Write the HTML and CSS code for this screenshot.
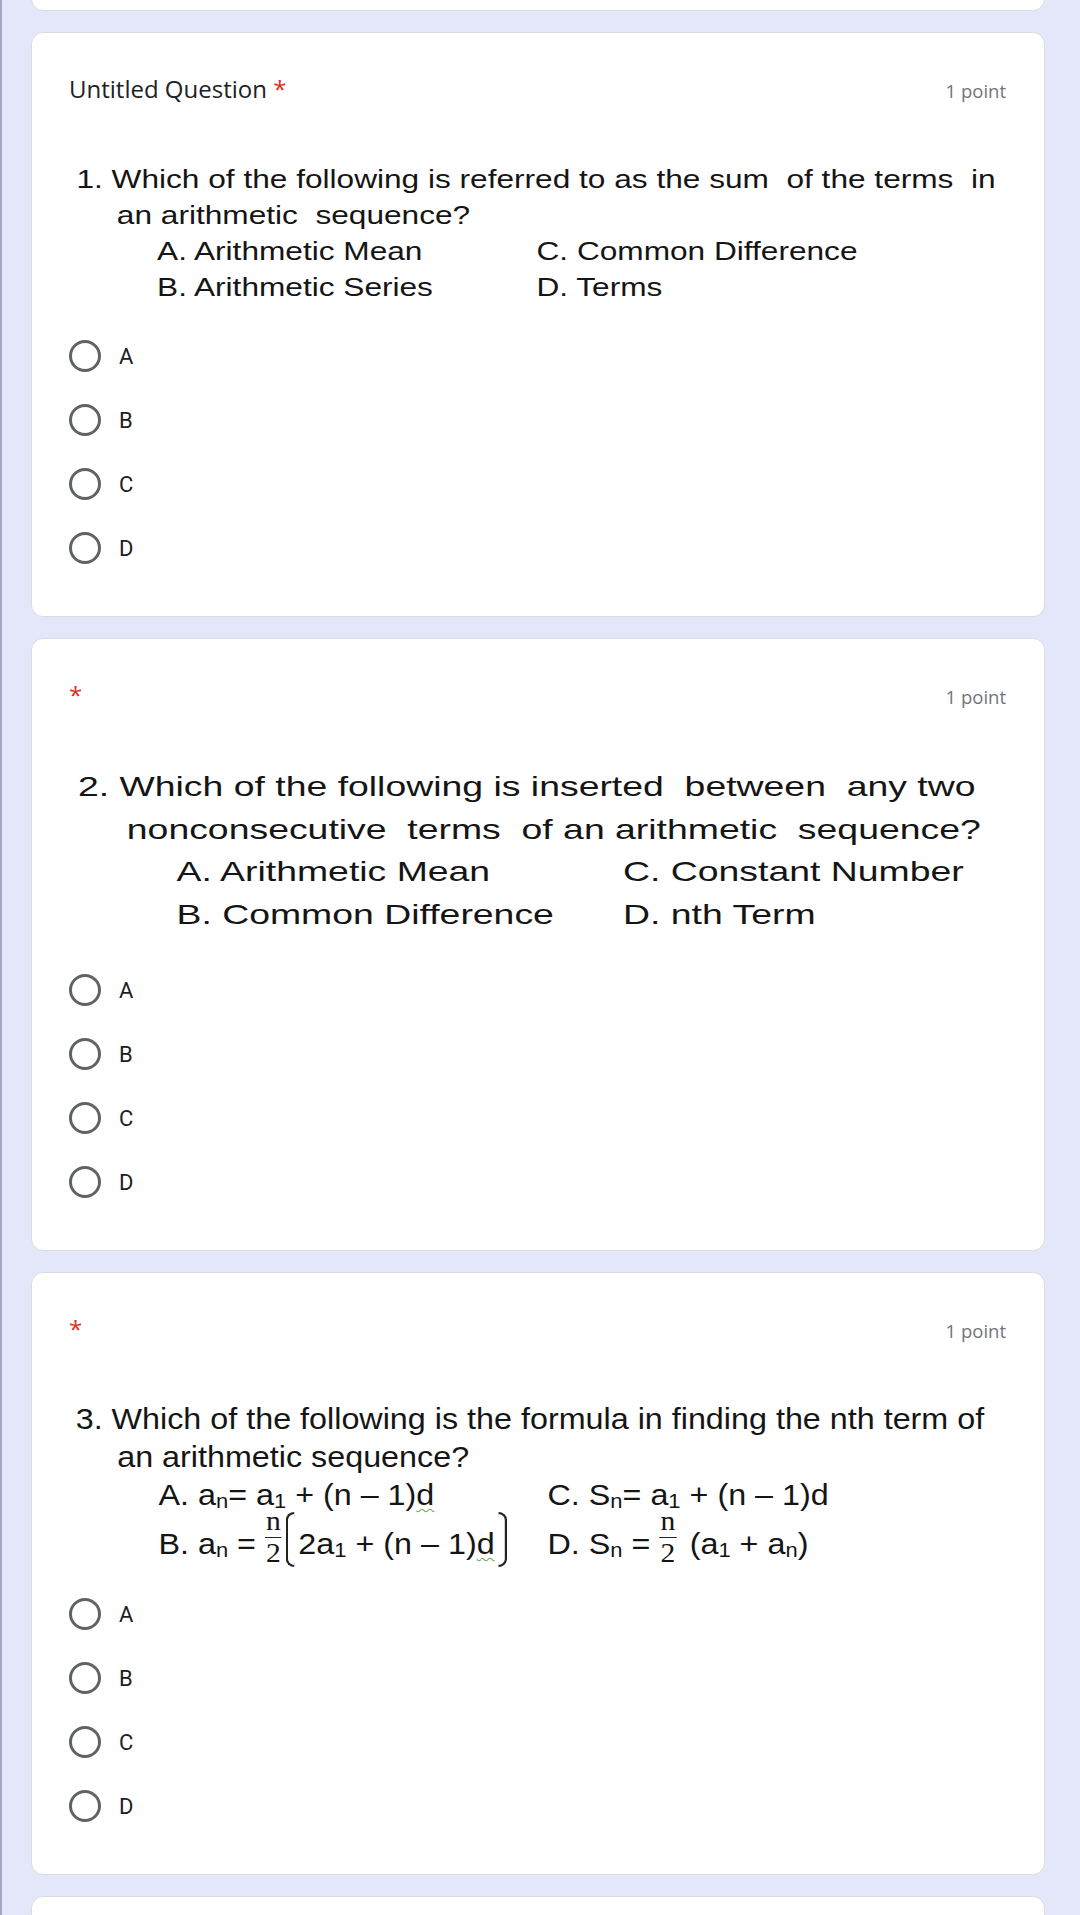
FILE: index.html
```html
<!DOCTYPE html>
<html lang="en">
<head>
    <meta charset="UTF-8">
    <meta name="viewport" content="width=device-width, initial-scale=1.0">
    <title>Quiz</title>
    <link rel="stylesheet" href="styles.css">
</head>
<body>
    <div class="page">
        <div class="card card-tail"></div>

        <div class="card">
            <div class="card-head">
                <div class="title">Untitled Question <span class="req">*</span></div>
                <div class="pts">1 point</div>
            </div>
            <div class="qimg q1">
                <div class="ln first">1. Which of the following is referred to as the sum  of the terms  in</div>
                <div class="ln ind">an arithmetic  sequence?</div>
                <div class="ln opts"><span>A. Arithmetic Mean</span><span>C. Common Difference</span></div>
                <div class="ln opts"><span>B. Arithmetic Series</span><span>D. Terms</span></div>
            </div>
            <div class="choices c1">
                <label class="radio"><span class="circle"></span><span class="lbl">A</span></label>
                <label class="radio"><span class="circle"></span><span class="lbl">B</span></label>
                <label class="radio"><span class="circle"></span><span class="lbl">C</span></label>
                <label class="radio"><span class="circle"></span><span class="lbl">D</span></label>
            </div>
        </div>

        <div class="card">
            <div class="card-head">
                <div class="title"><span class="req">*</span></div>
                <div class="pts">1 point</div>
            </div>
            <div class="qimg q2">
                <div class="ln first">2. Which of the following is inserted  between  any two</div>
                <div class="ln ind">nonconsecutive  terms  of an arithmetic  sequence?</div>
                <div class="ln opts"><span>A. Arithmetic Mean</span><span>C. Constant Number</span></div>
                <div class="ln opts"><span>B. Common Difference</span><span>D. nth Term</span></div>
            </div>
            <div class="choices c2">
                <label class="radio"><span class="circle"></span><span class="lbl">A</span></label>
                <label class="radio"><span class="circle"></span><span class="lbl">B</span></label>
                <label class="radio"><span class="circle"></span><span class="lbl">C</span></label>
                <label class="radio"><span class="circle"></span><span class="lbl">D</span></label>
            </div>
        </div>

        <div class="card">
            <div class="card-head">
                <div class="title"><span class="req">*</span></div>
                <div class="pts">1 point</div>
            </div>
            <div class="qimg q3">
                <div class="ln first">3. Which of the following is the formula in finding the nth term of</div>
                <div class="ln ind">an arithmetic sequence?</div>
                <div class="ln opts"><span>A. a<sub>n</sub>= a<sub>1</sub> + (n – 1)<span class="sq">d</span></span><span>C. S<sub>n</sub>= a<sub>1</sub> + (n – 1)d</span></div>
                <div class="ln opts tall"><span>B. a<sub>n</sub> = <span class="frac"><span class="num">n</span><span class="den">2</span></span><span class="brk"></span>2a<sub>1</sub> + (n – 1)<span class="sq">d</span><span class="brk r"></span></span><span>D. S<sub>n</sub> = <span class="frac"><span class="num">n</span><span class="den">2</span></span> (a<sub>1</sub> + a<sub>n</sub>)</span></div>
            </div>
            <div class="choices c3">
                <label class="radio"><span class="circle"></span><span class="lbl">A</span></label>
                <label class="radio"><span class="circle"></span><span class="lbl">B</span></label>
                <label class="radio"><span class="circle"></span><span class="lbl">C</span></label>
                <label class="radio"><span class="circle"></span><span class="lbl">D</span></label>
            </div>
        </div>

        <div class="card card-next"></div>
    </div>
</body>
</html>
```

FILE: styles.css
```css
html {
    overflow: hidden;
}
body {
    margin: 0;
    border-left: 2px solid #a4a7c2;
    background-color: #e4e7f9;
    font-family: "Open Sans", Roboto, sans-serif;
    color: #202124;
}
.page {
    display: flex;
    flex-direction: column;
    gap: 21px;
    padding: 0 35px 0 29px;
}
.card {
    background-color: #fff;
    border: 1px solid #dadce0;
    border-radius: 12px;
    padding: 40px 38px 36px 37px;
}
.card-tail {
    height: 41px;
    margin-top: -30px;
    padding: 0;
    box-sizing: border-box;
}
.card-next {
    height: 80px;
    padding: 0;
}
.card-head {
    display: flex;
    justify-content: space-between;
    align-items: baseline;
    height: 32px;
    line-height: 32px;
}
.title {
    font-size: 24px;
    color: #202124;
}
.req {
    color: #d93025;
}
.pts {
    font-size: 18.5px;
    color: #70757a;
}

/* question pictures */
.qimg {
    width: 700px;
    font-family: "Liberation Sans", Arial, sans-serif;
    color: #151515;
    transform-origin: left top;
}
.qimg .ln {
    white-space: pre;
}
.qimg .opts {
    display: grid;
}
.q1 {
    margin-top: 56px;
    font-size: 25.5px;
    line-height: 36px;
    transform: scaleX(1.24);
}
.q1 .first { padding-left: 6px; }
.q1 .ind { padding-left: 38.6px; }
.q1 .opts {
    padding-left: 71px;
    grid-template-columns: 306px auto;
}
.q2 {
    margin-top: 55px;
    font-size: 28px;
    line-height: 42.5px;
    transform: scaleX(1.335);
}
.q2 .first { padding-left: 6.7px; }
.q2 .ind { padding-left: 43.3px; }
.q2 .opts {
    padding-left: 80.5px;
    grid-template-columns: 334.5px auto;
}
.q3 {
    margin-top: 55px;
    font-size: 29.5px;
    line-height: 38px;
    transform: scaleX(1.095);
}
.q3 .first { padding-left: 6.1px; }
.q3 .ind { padding-left: 44px; }
.q3 .opts {
    padding-left: 81.7px;
    grid-template-columns: 355.3px auto;
}
.q3 .tall {
    line-height: 76px;
    margin-top: -8px;
}
sub {
    font-size: 0.68em;
    vertical-align: -0.16em;
    line-height: 0;
}
.sq {
    text-decoration: underline wavy #6aa84f;
    text-decoration-thickness: 1px;
    text-underline-offset: 3px;
}
.frac {
    display: inline-block;
    vertical-align: -8px;
    text-align: center;
    font-family: "Liberation Serif", "Times New Roman", serif;
    font-size: 27px;
    margin-right: 4px;
}
.frac .num {
    display: block;
    line-height: 28px;
    padding: 0 1px 2px;
    border-bottom: 1.5px solid #222;
}
.frac .den {
    display: block;
    line-height: 22px;
    padding-top: 4.5px;
}
.brk {
    display: inline-block;
    box-sizing: border-box;
    width: 8px;
    height: 55px;
    vertical-align: -13px;
    border: 2.5px solid #222;
    border-right: 0;
    border-radius: 8px 0 0 8px;
    margin-right: 3px;
}
.brk.r {
    border-left: 0;
    border-right: 2.5px solid #222;
    border-radius: 0 8px 8px 0;
    margin: 0 0 0 3px;
}

/* radio choices */
.choices {
    display: flex;
    flex-direction: column;
}
.c1 { margin-top: 19px; }
.c2 { margin-top: 22px; }
.c3 { margin-top: 0; }
.radio {
    display: flex;
    align-items: center;
    gap: 18px;
    height: 64px;
}
.circle {
    width: 32px;
    height: 32px;
    box-sizing: border-box;
    border: 3px solid #5f6368;
    border-radius: 50%;
}
.lbl {
    font-family: Roboto, "Open Sans", sans-serif;
    font-size: 22px;
    color: #202124;
}
```
